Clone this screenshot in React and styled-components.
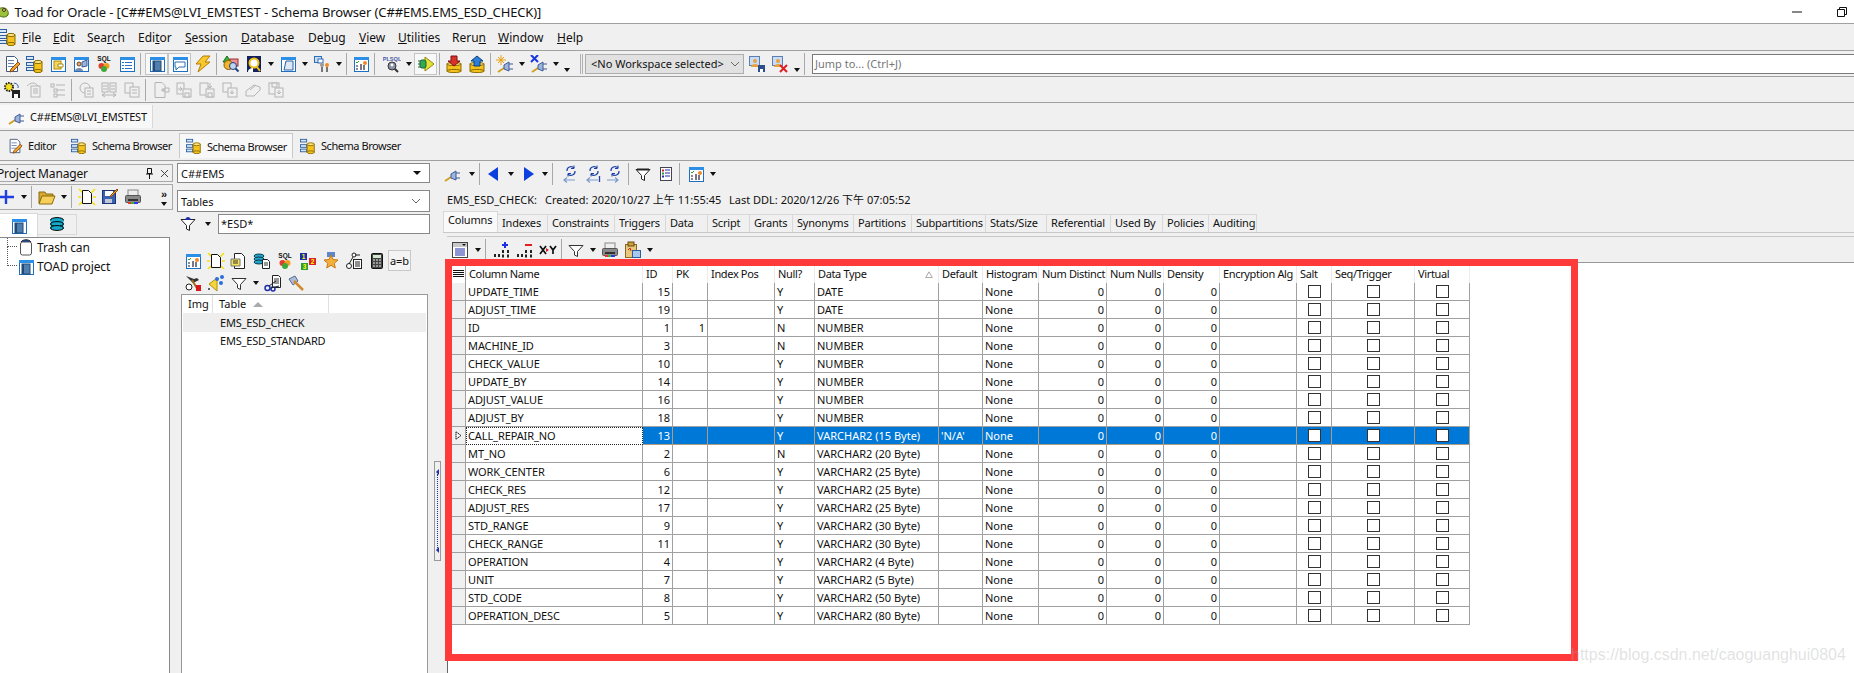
import React from "react";
import styled, { createGlobalStyle } from "styled-components";

const Global = createGlobalStyle`
  html, body { margin: 0; padding: 0; background: #f0f0f0; }
  body { width: 1854px; height: 673px; overflow: hidden; font-family: "Noto Sans", "Noto Sans CJK SC", sans-serif; font-size: 11px; color: #111; }
`;

/* ---------- icon drawings ---------- */
const Win = ({ x = 2, y = 2, w = 14, h = 14 }) => (
  <>
    <rect x={x + 0.5} y={y + 0.5} width={w} height={h} fill="#fff" stroke="#1c6fc4" />
    <rect x={x} y={y} width={w + 1} height={3} fill="#2b8fe8" />
  </>
);
const Cyl = ({ x = 8, y = 6, w = 8, h = 11, c = "#f5c21b", s = "#8a6a00" }) => (
  <>
    <rect x={x} y={y + 1} width={w} height={h - 2} fill={c} stroke={s} />
    <ellipse cx={x + w / 2} cy={y + 1} rx={w / 2} ry={1.6} fill="#ffe680" stroke={s} />
    <ellipse cx={x + w / 2} cy={y + h - 1} rx={w / 2} ry={1.6} fill={c} stroke={s} />
  </>
);
const Lines = ({ x, y, w, n = 3, c = "#667", step = 3 }) => (
  <>
    {Array.from({ length: n }).map((_, i) => (
      <rect key={i} x={x} y={y + i * step} width={w} height={1} fill={c} />
    ))}
  </>
);
const Funnel = ({ c = "#fff", s = "#222" }) => <path d="M2 4.5h14l-5.5 6v5l-3-1.5v-3.5z" fill={c} stroke={s} />;
const Plug = () => (
  <>
    <path d="M1 16l6-4" stroke="#d2a020" strokeWidth="2" />
    <path d="M7 9l5-3v9l-5-2z" fill="#9db4dc" stroke="#3d5a96" />
    <path d="M12 8h4M12 13h4" stroke="#3d5a96" />
  </>
);
const Sparkle = () => <path d="M2 2l6 6M8 2l-6 6M5 0v10M0 5h10" stroke="#e8a010" strokeWidth="1" />;
const Printer = () => (
  <>
    <rect x="4" y="2" width="10" height="6" fill="#eee" stroke="#888" />
    <rect x="1.5" y="7.5" width="15" height="7" rx="1" fill="#8a8a8a" stroke="#555" />
    <rect x="4" y="11" width="10" height="2" fill="#333" />
    <path d="M4 15h3" stroke="#e33" strokeWidth="2" />
    <path d="M7 15h3" stroke="#3b3" strokeWidth="2" />
    <path d="M10 15h4" stroke="#33e" strokeWidth="2" />
  </>
);
const Gray = ({ children }) => <g fill="#f0f0f0" stroke="#b4b4b4">{children}</g>;
const Refresh = ({ dir }) => (
  <>
    <path d="M6 6a4 4 0 0 1 7-3M14 6a4 4 0 0 1-7 3" fill="none" stroke="#1c3fa8" strokeWidth="1.2" />
    <path d="M13 0.500v3h-3M7 11.500v-3h3" fill="none" stroke="#1c3fa8" />
    <path d={dir === "r" ? "M2 15h11M10 12.500l3 2.500-3 2.500" : "M14 15H3M6 12.500L3 15l3 2.500"} fill="none" stroke="#7d9bd0" strokeWidth="1.2" />
  </>
);

const icons = {
  schema: (
    <>
      <g fill="#d8e6f8" stroke="#2c5f9e">
        <rect x="0.5" y="1.5" width="7" height="3" />
        <rect x="0.5" y="7.5" width="7" height="3" />
        <rect x="0.5" y="12.5" width="7" height="3" />
      </g>
      <Cyl />
    </>
  ),
  editor: (
    <>
      <path d="M3.5 1.5h8l3 3v12h-11z" fill="#fff" stroke="#44587a" />
      <Lines x={5} y={5} w={6} n={3} c="#6a86b0" />
      <path d="M15 7l2 2-7 7-3 1 1-3z" fill="#f2a32c" stroke="#8f4a10" />
    </>
  ),
  docWin: (
    <>
      <Win />
      <rect x="5" y="6" width="7" height="8" fill="#f6d860" stroke="#a88a10" />
      <path d="M9 9h5v3H9z" fill="#fff" stroke="#a88a10" />
    </>
  ),
  people: (
    <>
      <Win />
      <circle cx="7" cy="9" r="2" fill="#e0a878" stroke="#704a20" />
      <path d="M3 16c0-4 8-4 8 0z" fill="#7a8aa8" />
      <path d="M10 7l5-2v6l-5 1z" fill="#9db4dc" stroke="#3d5a96" />
    </>
  ),
  sql: (
    <>
      <text x="9" y="6" textAnchor="middle" fontFamily="Liberation Sans, sans-serif" fontWeight="700" fontSize="6.5" fill="#111">SQL</text>
      <circle cx="6.5" cy="11" r="3" fill="#e33b2c" />
      <circle cx="11.5" cy="11" r="3" fill="#f0a020" />
      <circle cx="9" cy="14" r="3" fill="#3fa83a" />
    </>
  ),
  listWin: (
    <>
      <Win />
      <Lines x={4} y={7} w={2} n={3} c="#2b6fc0" />
      <Lines x={7} y={7} w={7} n={3} c="#2b6fc0" />
    </>
  ),
  book: (
    <>
      <Win />
      <rect x="5" y="6" width="8" height="10" fill="#4f7fb0" stroke="#234a74" />
      <rect x="5" y="6" width="2" height="10" fill="#234a74" />
    </>
  ),
  chat: (
    <>
      <Win />
      <path d="M4 7h10v5H8l-3 3v-3H4z" fill="#fff" stroke="#2c6fb4" />
    </>
  ),
  bolt: <path d="M9 1h7l-5 6h5L4 17l3-8H2z" fill="#f9c82a" stroke="#b47d08" />,
  shapes: (
    <>
      <path d="M5 1l4 6H1z" fill="#3fae3a" stroke="#1a6d18" />
      <rect x="8" y="4" width="8" height="7" fill="#e8929a" stroke="#a02c2c" />
      <circle cx="6.5" cy="10" r="4.5" fill="#f2b42c" stroke="#8a5a0a" />
      <circle cx="11" cy="11" r="3.5" fill="#bcd4ee" stroke="#1f3f7a" />
      <path d="M13.5 13.5l3 3" stroke="#1f3f7a" strokeWidth="2" />
    </>
  ),
  face: (
    <>
      <rect x="2" y="1" width="14" height="16" fill="#14205e" />
      <circle cx="9" cy="8" r="4.5" fill="#fff" stroke="#f2c21b" strokeWidth="2" />
      <path d="M12 12l3 4" stroke="#f2c21b" strokeWidth="2" />
      <path d="M3 17c0-3 3-4 5-4v4z" fill="#fff" />
    </>
  ),
  frame: (
    <>
      <Win />
      <path d="M7 6h7v9H5z" fill="#dce8f6" stroke="#2c5f9e" />
    </>
  ),
  pins: (
    <>
      <rect x="1.5" y="1.5" width="7" height="6" fill="#c9dcf4" stroke="#2c6fb4" />
      <rect x="5" y="4" width="5" height="4" fill="#fff" stroke="#2c6fb4" />
      <circle cx="9" cy="10" r="2" fill="#999" />
      <circle cx="14" cy="10" r="2" fill="#ef8a2c" />
      <path d="M9 12v5M14 12v5" stroke="#777" strokeWidth="2" />
    </>
  ),
  chart: (
    <>
      <Win />
      <path d="M4 7l1 1 2-2" fill="none" stroke="#2a9a3a" />
      <rect x="4" y="10" width="2" height="2" fill="#889" />
      <rect x="4" y="13" width="2" height="2" fill="#889" />
      <rect x="8" y="9" width="2" height="6" fill="#778" />
      <rect x="11" y="10" width="2" height="5" fill="#778" />
      <circle cx="13" cy="8" r="2" fill="#ef8a2c" />
    </>
  ),
  plsql: (
    <>
      <text x="9" y="5.5" textAnchor="middle" fontFamily="Liberation Sans, sans-serif" fontWeight="700" fontSize="5.6" fill="#4a5aa0">PLSQL</text>
      <circle cx="9" cy="11" r="4" fill="#8a93a8" stroke="#333" />
      <circle cx="9" cy="10" r="1.4" fill="#fff" />
      <path d="M12 14l3 3" stroke="#333" strokeWidth="2" />
    </>
  ),
  play: (
    <>
      <path d="M8 2l9 7-9 7z" fill="#e6e03a" stroke="#8d8a10" />
      <rect x="3" y="5" width="6" height="8" rx="2" fill="#34a853" stroke="#14652c" />
      <path d="M1 6h2M1 9h2M1 12h2" stroke="#14652c" />
    </>
  ),
  dbDown: (
    <>
      <Cyl x={2} y={8} w={14} h={9} />
      <path d="M6 1h6v5h3l-6 5-6-5h3z" fill="#d8322a" stroke="#7a1410" />
    </>
  ),
  dbUp: (
    <>
      <Cyl x={2} y={8} w={14} h={9} />
      <path d="M9 1l6 5h-3v5H6V6H3z" fill="#2b7fd8" stroke="#103f7a" />
    </>
  ),
  plugNew: (
    <>
      <Sparkle />
      <g transform="translate(1 1)">
        <Plug />
      </g>
    </>
  ),
  plugX: (
    <>
      <path d="M1 0l7 7M8 0L1 7" stroke="#1a36e0" strokeWidth="2" />
      <g transform="translate(1 1)">
        <Plug />
      </g>
    </>
  ),
  plug: <Plug />,
  wsSave: (
    <>
      <rect x="1.5" y="1.5" width="10" height="9" fill="#c9dcf4" stroke="#5b7fb4" />
      <circle cx="7" cy="6" r="2" fill="#e8a040" />
      <path d="M3 12c0-4 8-4 8 0z" fill="#e8a040" />
      <rect x="10" y="10" width="7" height="7" fill="#2c4f8c" />
      <rect x="12" y="14" width="3" height="3" fill="#fff" />
    </>
  ),
  wsDel: (
    <>
      <rect x="1.5" y="1.5" width="10" height="9" fill="#c9dcf4" stroke="#5b7fb4" />
      <circle cx="7" cy="6" r="2" fill="#e8a040" />
      <path d="M3 12c0-4 8-4 8 0z" fill="#e8a040" />
      <path d="M9 10l7 7M16 10l-7 7" stroke="#e02020" strokeWidth="2" />
    </>
  ),
  gearSave: (
    <>
      <circle cx="6" cy="6" r="4" fill="#f2e020" stroke="#222" strokeDasharray="1.5 1" strokeWidth="2" />
      <path d="M11 2q5 1 4 5" fill="none" stroke="#2b5fa8" />
      <rect x="9" y="9" width="8" height="8" fill="#222" />
      <rect x="11" y="13" width="4" height="4" fill="#fff" />
    </>
  ),
  g1: (
    <Gray>
      <path d="M1 5c4-4 8-4 11 0" />
      <rect x="5" y="5" width="9" height="11" />
      <path d="M7 8h5M7 10h5M7 12h5" />
    </Gray>
  ),
  g2: (
    <Gray>
      <rect x="2" y="3" width="3" height="3" />
      <path d="M7 4h9M7 9h9M7 14h9" />
      <rect x="5" y="8" width="3" height="3" />
      <rect x="5" y="13" width="3" height="3" />
    </Gray>
  ),
  g3: (
    <Gray>
      <circle cx="8" cy="7" r="5" />
      <rect x="8" y="7" width="8" height="9" />
      <path d="M10 10h4M10 13h4" />
    </Gray>
  ),
  g4: (
    <Gray>
      <rect x="2" y="2" width="6" height="9" />
      <rect x="10" y="2" width="6" height="9" />
      <path d="M3 5h4M11 5h4M3 8h4M11 8h4M2 14h14M5 12l-3 2 3 2M13 12l3 2-3 2" />
    </Gray>
  ),
  g5: (
    <Gray>
      <rect x="2" y="2" width="8" height="10" />
      <rect x="7" y="6" width="9" height="10" />
      <path d="M9 9h5M9 12h5" />
    </Gray>
  ),
  g6: (
    <Gray>
      <path d="M3 1.5h7l3 3v12H3z" />
      <path d="M9 9h4M11 7v4" />
      <path d="M13 7h4v4h-4z" />
    </Gray>
  ),
  g7: (
    <Gray>
      <rect x="2" y="2" width="7" height="11" />
      <rect x="8" y="8" width="8" height="8" />
      <rect x="10" y="12" width="4" height="4" />
      <path d="M3 8h4M5 6l2 2-2 2" />
    </Gray>
  ),
  g8: (
    <Gray>
      <rect x="2" y="2" width="8" height="12" />
      <rect x="8" y="8" width="8" height="8" />
      <rect x="10" y="12" width="4" height="4" />
      <path d="M12 2v5M10 5l2 2 2-2" />
    </Gray>
  ),
  g9: (
    <Gray>
      <rect x="2" y="2" width="8" height="9" />
      <rect x="7" y="7" width="9" height="9" />
      <path d="M11 9v4M9 11l2 2 2-2" />
    </Gray>
  ),
  g10: (
    <Gray>
      <path d="M2 10l8-6 6 2v3l-6 6H2z" />
      <path d="M6 9l6-5" />
    </Gray>
  ),
  g11: (
    <Gray>
      <rect x="2" y="2" width="10" height="11" />
      <rect x="5" y="2" width="5" height="4" />
      <rect x="8" y="7" width="8" height="9" />
      <path d="M12 9v4M10 11l2 2 2-2" />
    </Gray>
  ),
  plus: <path d="M7 2v14M1 9h14" stroke="#1f3fe0" strokeWidth="2.4" />,
  folder: (
    <>
      <path d="M1 4h6l1 2h7v3H4l-3 6z" fill="#d8a832" stroke="#8a6a10" />
      <path d="M4 8h13l-3 8H1z" fill="#f6cf5a" stroke="#8a6a10" />
    </>
  ),
  newDoc: (
    <>
      <path d="M1 1l4 4M17 1l-4 4M1 17l3-3M17 17l-3-3M0 9h3M15 9h3" stroke="#f4e012" strokeWidth="1.6" />
      <path d="M4.5 2.5h6l3 3v10h-9z" fill="#fff" stroke="#111" />
    </>
  ),
  floppy: (
    <>
      <rect x="1.5" y="2.5" width="13" height="13" fill="#3a62b4" stroke="#1a3474" />
      <rect x="4" y="3" width="8" height="5" fill="#fff" />
      <rect x="4" y="11" width="7" height="4" fill="#c0c8d8" />
      <path d="M16 1l1 1-6 6-2 1 1-2z" fill="#f2a32c" stroke="#8f4a10" />
    </>
  ),
  printer: <Printer />,
  trash: (
    <>
      <rect x="3.5" y="3" width="11" height="13" rx="2" fill="#fff" stroke="#555" />
      <path d="M4 3c2-3 8-3 10 0" fill="#2c4f8c" stroke="#223" />
    </>
  ),
  dbStack: (
    <>
      <ellipse cx="9" cy="4" rx="6.5" ry="2.4" fill="#16a8c8" stroke="#000" />
      <rect x="2.5" y="4" width="13" height="9" fill="#16a8c8" />
      <ellipse cx="9" cy="8" rx="6.5" ry="2.4" fill="#16a8c8" stroke="#000" />
      <ellipse cx="9" cy="12" rx="6.5" ry="2.4" fill="#16a8c8" stroke="#000" />
    </>
  ),
  filterHat: (
    <>
      <Funnel />
      <path d="M6 5c1-4 5-4 6 0z" fill="#1c2ea8" />
    </>
  ),
  funnelBlack: (
    <>
      <Funnel />
      <path d="M3 4.5h12" stroke="#222" strokeWidth="2" />
    </>
  ),
  funnel: <Funnel s="#333" />,
  docEdit: (
    <>
      <path d="M4.5 1.5h7l3 3v12h-10z" fill="#fff" stroke="#222" />
      <path d="M1 7h9v7H1z" fill="#f5e25a" stroke="#777" />
      <path d="M3 9h5M3 11h5" stroke="#333" />
    </>
  ),
  dbDoc: (
    <>
      <ellipse cx="6" cy="4" rx="5" ry="2" fill="#22a6c8" stroke="#103a50" />
      <ellipse cx="6" cy="7" rx="5" ry="2" fill="#22a6c8" stroke="#103a50" />
      <ellipse cx="6" cy="10" rx="5" ry="2" fill="#22a6c8" stroke="#103a50" />
      <path d="M9.5 7.5h5l2 2v7h-7z" fill="#fff" stroke="#222" />
      <path d="M11 11h4M11 13h4" stroke="#333" />
    </>
  ),
  numbers: (
    <>
      <rect x="1" y="1" width="7" height="7" fill="#1c2ea8" />
      <rect x="10" y="6" width="7" height="7" fill="#d8202a" />
      <rect x="2" y="11" width="7" height="7" fill="#2a9a3a" />
      <text x="4.5" y="7" textAnchor="middle" fontSize="6.5" fontWeight="700" fill="#ff0" fontFamily="Liberation Sans, sans-serif">1</text>
      <text x="13.5" y="12" textAnchor="middle" fontSize="6.5" fontWeight="700" fill="#ff0" fontFamily="Liberation Sans, sans-serif">2</text>
      <text x="5.5" y="17" textAnchor="middle" fontSize="6.5" fontWeight="700" fill="#ff0" fontFamily="Liberation Sans, sans-serif">3</text>
    </>
  ),
  medal: (
    <>
      <path d="M5 0h8v5H5z" fill="#5f86c8" />
      <path d="M9 3l2 4.5 5 .5-3.700 3.300 1 4.700L9 13.300 4.700 16l1-4.700L2 8l5-.5z" fill="#f4b03c" stroke="#c87a10" />
    </>
  ),
  tree: (
    <>
      <circle cx="4" cy="14" r="2.500" fill="#fff" stroke="#222" />
      <circle cx="9" cy="3" r="2" fill="#fff" stroke="#222" />
      <path d="M4 12l4-7M10 3h5" stroke="#222" />
      <rect x="8.500" y="7.500" width="8" height="9" fill="#fff" stroke="#222" />
      <path d="M10 10h5M10 12h5M10 14h5" stroke="#222" />
    </>
  ),
  calc: (
    <>
      <rect x="3.500" y="1.500" width="11" height="15" rx="1" fill="#444" stroke="#111" />
      <rect x="5" y="3" width="8" height="3" fill="#cfe8cf" />
      <path d="M5 8h2M8 8h2M11 8h2M5 11h2M8 11h2M11 11h2M5 14h2M8 14h2M11 14h2" stroke="#eee" />
    </>
  ),
  hammerRed: (
    <>
      <path d="M2 2l8 3 3-1 2 2-6 3z" fill="#333" />
      <path d="M8 6l6 10" stroke="#a06a20" strokeWidth="2" />
      <circle cx="5" cy="13" r="3" fill="#fff" stroke="#222" />
      <rect x="12" y="11" width="5" height="6" fill="#d81818" />
    </>
  ),
  dots: (
    <>
      <path d="M2 10l8-6v13z" fill="#f4d53a" stroke="#b09010" />
      <circle cx="10" cy="5" r="2" fill="#2b6fd8" />
      <circle cx="15" cy="3" r="2" fill="#2b6fd8" />
      <circle cx="14" cy="9" r="2" fill="#2b6fd8" />
      <circle cx="2" cy="15" r="1" fill="#333" />
    </>
  ),
  scissors: (
    <>
      <path d="M8.500 1.500h6l2 2v10h-8z" fill="#fff" stroke="#222" />
      <path d="M10 5h5M10 7h5M10 9h5" stroke="#333" />
      <circle cx="3.500" cy="14" r="2.500" fill="none" stroke="#1c2ea8" strokeWidth="1.500" />
      <circle cx="9" cy="15" r="2" fill="none" stroke="#1c2ea8" strokeWidth="1.500" />
      <path d="M5 12l7-5M7 14l8-2" stroke="#222" />
    </>
  ),
  axe: (
    <>
      <path d="M2 5l6-3 3 5-5 4z" fill="#aebcd8" stroke="#556a90" />
      <path d="M7 7l9 9" stroke="#d08a30" strokeWidth="2.500" />
    </>
  ),
  arrowL: <path d="M3 9l10-7v14z" fill="#0b3fe0" />,
  arrowR: <path d="M15 9L5 2v14z" fill="#0b3fe0" />,
  r1: <Refresh dir="l" />,
  r2: (
    <>
      <Refresh dir="l" />
      <path d="M15.500 11v6" stroke="#1c3fa8" strokeWidth="1.300" />
    </>
  ),
  r3: <Refresh dir="r" />,
  listSmall: (
    <>
      <rect x="3.500" y="2.500" width="11" height="13" fill="#fff" stroke="#445" />
      <path d="M8 5h5M8 8h5M8 11h5" stroke="#1c2ea8" />
      <rect x="5" y="4.500" width="2" height="2" fill="#d82020" />
      <rect x="5" y="7.500" width="2" height="2" fill="#2a9a3a" />
      <rect x="5" y="10.500" width="2" height="2" fill="#1c2ea8" />
    </>
  ),
  colGrid: (
    <>
      <rect x="1.500" y="1.500" width="15" height="15" fill="#fff" stroke="#444" />
      <rect x="2" y="2" width="14" height="4" fill="#c8c8c8" />
      <path d="M4 8h10M4 10h10M4 12h10M4 14h10" stroke="#1c2ea8" />
      <path d="M11 3h4l-2 2z" fill="#111" />
    </>
  ),
  addBars: (
    <>
      <path d="M2 13v4M6 13v4M10 9v8M15 9v8" stroke="#222" strokeWidth="2" strokeDasharray="3 1.500" />
      <path d="M12 1v6M9 4h6" stroke="#1c2ee0" strokeWidth="2" />
    </>
  ),
  delBars: (
    <>
      <path d="M2 13v4M6 13v4M10 9v8M15 9v8" stroke="#222" strokeWidth="2" strokeDasharray="3 1.500" />
      <path d="M9 4h7" stroke="#e02020" strokeWidth="2" />
    </>
  ),
  xy: (
    <>
      <path d="M1 5l6 8M7 5l-6 8M11 5l3 4 3-4M14 9v4" stroke="#111" strokeWidth="1.700" fill="none" />
      <path d="M7 7l3 2-3 2z" fill="#d82020" />
    </>
  ),
  clip: (
    <>
      <rect x="1.500" y="3.500" width="11" height="13" fill="#e8c87a" stroke="#8a6a20" />
      <rect x="4" y="1" width="6" height="4" fill="#c8a040" stroke="#6a4a10" />
      <path d="M4 9l2-2 1 3" fill="none" stroke="#d02020" />
      <rect x="8.500" y="9.500" width="8" height="7" fill="#a8c8ee" stroke="#2c5f9e" />
    </>
  ),
};

/* ---------- shared parts ---------- */
const Svg = styled.svg`
  display: block;
  flex: none;
  overflow: hidden;
`;
const Icon = ({ name, size = 18 }) => (
  <Svg width={size} height={size} viewBox="0 0 18 18">
    {icons[name]}
  </Svg>
);
const Cell = styled.span`
  flex: none;
  width: ${(p) => p.$w || 23}px;
  height: 22px;
  display: flex;
  align-items: center;
  justify-content: center;
  box-sizing: border-box;
  ${(p) => p.$on && "background:#f8f8f8;outline:1px solid #c4c4c4;outline-offset:-1px;"}
`;
const DropCell = styled.span`
  flex: none;
  width: 11px;
  height: 22px;
  display: flex;
  align-items: ${(p) => (p.$low ? "flex-end" : "center")};
  justify-content: center;
  padding-bottom: ${(p) => (p.$low ? 3 : 0)}px;
  box-sizing: border-box;
  &::after {
    content: "";
    border-left: 3.5px solid transparent;
    border-right: 3.5px solid transparent;
    border-top: 4px solid #111;
  }
`;
const SepCell = styled.span`
  flex: none;
  width: 5px;
  height: 22px;
  display: flex;
  justify-content: center;
  &::after {
    content: "";
    width: 1px;
    background: #a8a8a8;
  }
`;
const Gap = styled.span`
  flex: none;
  width: ${(p) => p.$w}px;
`;
const Strip = ({ items }) => (
  <>
    {items.map((it, i) => {
      if (typeof it === "number") return <Gap key={i} $w={it} />;
      if (it === "|") return <SepCell key={i} />;
      if (it === "v") return <DropCell key={i} />;
      if (it === "_") return <DropCell key={i} $low />;
      const [name, w] = it.split(":");
      const on = name.endsWith("!");
      const n = on ? name.slice(0, -1) : name;
      return (
        <Cell key={i} $w={w ? +w : 23} $on={on}>
          <Icon name={n} />
        </Cell>
      );
    })}
  </>
);

/* ---------- top bars ---------- */
const Page = styled.div`
  width: 1854px;
  height: 673px;
  display: flex;
  flex-direction: column;
  overflow: hidden;
  position: relative;
`;
const TitleBar = styled.header`
  height: 23px;
  flex: none;
  background: #fff;
  border-bottom: 1px solid #a0a0a0;
  display: flex;
  align-items: center;
  font-size: 13px;
  padding-right: 7px;
`;
const TitleLogo = styled.span`
  width: 14px;
  margin-left: -4px;
  margin-right: 4.500px;
`;
const TitleText = styled.span`
  flex: 1;
  color: #111;
  letter-spacing: -0.13px;
`;
const WinButtons = styled.span`
  display: flex;
  align-items: center;
  gap: 35px;
`;
const MenuBar = styled.nav`
  height: 26px;
  flex: none;
  background: #f0f0f0;
  border-bottom: 1px solid #a0a0a0;
  display: flex;
  align-items: center;
  font-size: 12px;
`;
const MenuLogo = styled.span`
  width: 23px;
  margin-left: -1px;
  flex: none;
`;
const MenuItem = styled.span`
  flex: none;
  width: ${(p) => p.$w}px;
`;
const Key = styled.span`
  text-decoration: underline;
`;
const ToolRow = styled.div`
  height: 25px;
  flex: none;
  box-sizing: content-box;
  border-bottom: 1px solid #a0a0a0;
  display: flex;
  align-items: center;
`;
const DoubleSep = styled.span`
  flex: none;
  width: 3px;
  height: 20px;
  margin: 0 2px 0 3px;
  border-left: 1px solid #b0b0b0;
  border-right: 1px solid #b0b0b0;
  box-sizing: border-box;
`;
const WorkspaceCombo = styled.div`
  flex: none;
  width: 159px;
  height: 20px;
  box-sizing: border-box;
  border: 1px solid #adadad;
  background: #e1e1e1;
  display: flex;
  align-items: center;
  justify-content: space-between;
  padding: 0 3px 0 5px;
`;
const Chevron = styled.svg`
  flex: none;
  display: block;
`;
const ChevDown = () => (
  <Chevron width="10" height="6" viewBox="0 0 10 6">
    <path d="M1 1l4 4 4-4" fill="none" stroke="#666" />
  </Chevron>
);
const JumpInput = styled.div`
  flex: 1;
  height: 20px;
  box-sizing: border-box;
  margin-left: 5px;
  background: #fff;
  border: 1px solid #7a7a7a;
  border-right: none;
  padding-left: 2px;
  color: #777;
  line-height: 18px;
`;
const ConnBar = styled.div`
  height: 28px;
  flex: none;
  border-bottom: 1px solid #a0a0a0;
  padding-top: 2px;
  box-sizing: border-box;
`;
const ConnTab = styled.div`
  width: 153px;
  height: 23px;
  background: #f8f8f8;
  border-right: 1px solid #d8d8d8;
  display: flex;
  align-items: center;
  gap: 4px;
  padding-left: 8px;
  box-sizing: border-box;
  letter-spacing: -0.2px;
`;
const WinBar = styled.div`
  height: 30px;
  flex: none;
  box-sizing: border-box;
  border-bottom: 1px solid #a0a0a0;
  display: flex;
  align-items: center;
`;
const WinTab = styled.div`
  flex: none;
  width: ${(p) => p.$w}px;
  height: 25px;
  box-sizing: border-box;
  display: flex;
  align-items: center;
  gap: 5px;
  padding-left: 7px;
  white-space: nowrap;
  letter-spacing: -0.45px;
  ${(p) => p.$on && "background:#f8f8f8;border:1px solid #c8c8c8;border-bottom:none;padding-left:6px;"}
`;

/* ---------- main ---------- */
const Main = styled.main`
  flex: 1;
  min-height: 0;
  display: flex;
`;
const ProjectPanel = styled.section`
  width: 173px;
  flex: none;
  margin-right: 4px;
  padding-top: 3px;
  display: flex;
  flex-direction: column;
`;
const PanelHead = styled.div`
  height: 18px;
  flex: none;
  box-sizing: border-box;
  border: 1px solid #a8a8a8;
  border-left: none;
  font-size: 12px;
  display: flex;
  align-items: center;
  justify-content: space-between;
  padding-right: 3px;
`;
const PanelTitle = styled.span`
  margin-left: -3px;
  letter-spacing: -0.15px;
`;
const HeadTools = styled.span`
  display: flex;
  align-items: center;
  gap: 6px;
`;
const PanelTools = styled.div`
  height: 26px;
  flex: none;
  margin-top: 2px;
  box-sizing: border-box;
  border: 1px solid #a8a8a8;
  border-left: none;
  display: flex;
  align-items: center;
`;
const MoreGlyph = styled.span`
  margin-left: auto;
  margin-right: 2px;
  width: 12px;
  display: flex;
  flex-direction: column;
  align-items: center;
  font-size: 11px;
  line-height: 10px;
  font-family: "Liberation Sans", sans-serif;
  font-weight: 700;
`;
const MoreDrop = styled.span`
  margin-top: 3px;
  border-left: 3.500px solid transparent;
  border-right: 3.500px solid transparent;
  border-top: 4px solid #111;
`;
const SideTabs = styled.div`
  height: 24px;
  flex: none;
  margin-top: 3px;
  display: flex;
`;
const SideTab = styled.div`
  width: ${(p) => (p.$on ? 38 : 39)}px;
  height: ${(p) => (p.$on ? 24 : 21)}px;
  margin-top: ${(p) => (p.$on ? 0 : 1)}px;
  box-sizing: border-box;
  background: ${(p) => (p.$on ? "#fff" : "#f0f0f0")};
  border: 1px solid #d8d8d8;
  border-left: none;
  ${(p) => p.$on && "border-bottom:none;"}
  display: flex;
  align-items: center;
  justify-content: center;
`;
const TreeBox = styled.div`
  flex: 1;
  width: 170px;
  box-sizing: border-box;
  background: #fff;
  border: 1px solid #888;
  border-left: none;
  border-bottom: none;
  padding-left: 7px;
  font-size: 12px;
`;
const TreeRow = styled.div`
  height: 19px;
  display: flex;
  align-items: center;
`;
const Elbow = styled.span`
  flex: none;
  align-self: flex-start;
  width: 10px;
  height: ${(p) => (p.$tall ? 19 : 9)}px;
  margin-top: ${(p) => (p.$tall ? -10 : 0)}px;
  box-sizing: border-box;
  border-left: 1px dotted #555;
  border-bottom: 1px dotted #555;
`;
const TreeLabel = styled.span`
  margin-left: 2px;
  letter-spacing: -0.1px;
`;

const SchemaPanel = styled.section`
  width: 253px;
  flex: none;
  padding-top: 2px;
  display: flex;
  flex-direction: column;
`;
const Combo = styled.div`
  height: ${(p) => p.$h}px;
  flex: none;
  box-sizing: border-box;
  background: #fff;
  border: 1px solid #888;
  margin-bottom: 7px;
  padding: 0 8px 0 3px;
  display: flex;
  align-items: center;
  justify-content: space-between;
`;
const ComboCaret = styled.span`
  border-left: 4px solid transparent;
  border-right: 4px solid transparent;
  border-top: 4px solid #111;
`;
const FilterRow = styled.div`
  height: 22px;
  flex: none;
  margin-top: -6px;
  display: flex;
  align-items: center;
`;
const FilterInput = styled.div`
  flex: 1;
  height: 20px;
  box-sizing: border-box;
  background: #fff;
  border: 1px solid #888;
  padding-left: 2px;
  line-height: 18px;
`;
const IconRow = styled.div`
  height: ${(p) => p.$h}px;
  margin-top: ${(p) => p.$mt || 0}px;
  flex: none;
  display: flex;
  align-items: center;
`;
const TextButton = styled.span`
  flex: none;
  width: 23px;
  height: 21px;
  box-sizing: border-box;
  border: 1px solid #c8c8c8;
  background: #f4f4f4;
  display: flex;
  align-items: center;
  justify-content: center;
  font-size: 11px;
`;
const TableList = styled.div`
  flex: 1;
  margin: 0 2px 0 4px;
  box-sizing: border-box;
  border: 1px solid #999;
  border-bottom: none;
  background: #fff;
`;
const ListHead = styled.div`
  height: 18px;
  display: flex;
  font-size: 11px;
`;
const ListHeadCell = styled.span`
  flex: none;
  width: ${(p) => p.$w}px;
  box-sizing: border-box;
  border-right: 1px solid #e0e0e0;
  padding-left: ${(p) => p.$pl}px;
  line-height: 18px;
  display: flex;
  align-items: center;
  gap: 7px;
`;
const SortUp = styled.span`
  border-left: 5px solid transparent;
  border-right: 5px solid transparent;
  border-bottom: 5px solid #aaa;
`;
const ListRow = styled.div`
  height: ${(p) => (p.$on ? 19 : 17)}px;
  margin: 0 1px;
  padding-left: 37px;
  background: ${(p) => (p.$on ? "#eee" : "#fff")};
  display: flex;
  align-items: center;
  letter-spacing: -0.2px;
`;
const Splitter = styled.div`
  flex: none;
  align-self: flex-start;
  width: 7px;
  height: 100px;
  margin: 300px 2px 0 4px;
  box-sizing: border-box;
  border: 1px solid #999;
  background: #f0f0f0;
  display: flex;
  flex-direction: column;
  align-items: center;
  justify-content: space-between;
  padding: 7px 0;
  position: relative;
  &::before {
    content: "";
    position: absolute;
    top: 12px;
    bottom: 12px;
    left: 2px;
    border-left: 1px dotted #1c2ea8;
  }
`;
const SplitArrow = styled.span`
  border-top: 3px solid transparent;
  border-bottom: 3px solid transparent;
  border-right: 3px solid #1c2ea8;
`;

const DataPane = styled.section`
  flex: 1;
  min-width: 0;
  display: flex;
  flex-direction: column;
  position: relative;
`;
const PaneTools = styled.div`
  height: 24px;
  margin-top: 1px;
  flex: none;
  display: flex;
  align-items: center;
`;
const InfoLine = styled.div`
  height: 26px;
  flex: none;
  box-sizing: border-box;
  padding-left: 4px;
  display: flex;
  align-items: center;
`;
const InfoPart = styled.span`
  flex: none;
  width: ${(p) => p.$w}px;
  white-space: nowrap;
`;
const TabStrip = styled.div`
  height: 21px;
  flex: none;
  box-sizing: border-box;
  border-bottom: 1px solid #c8c8c8;
  display: flex;
  align-items: flex-end;
`;
const PageTab = styled.span`
  flex: none;
  width: ${(p) => p.$w}px;
  height: ${(p) => (p.$on ? 21 : 18)}px;
  box-sizing: border-box;
  background: ${(p) => (p.$on ? "#f9f9f9" : "#f0f0f0")};
  border-top: 1px solid #d8d8d8;
  border-right: 1px solid #d8d8d8;
  ${(p) => p.$on && "border-left:1px solid #d8d8d8;"}
  padding-left: 4px;
  line-height: 16px;
  white-space: nowrap;
  letter-spacing: -0.2px;
`;
const GridTools = styled.div`
  height: 26px;
  margin-top: 3px;
  flex: none;
  display: flex;
  align-items: center;
  border-top: 1px solid #c8c8c8;
  box-sizing: border-box;
  margin-left: 4px;
  padding-left: 0;
`;
const GridPanel = styled.div`
  flex: 1;
  min-height: 0;
  margin-left: 4px;
  background: #fff;
  border-left: 1px solid #666;
  border-top: 1px solid #999;
  padding: 2px 0 0 4px;
`;
const Grid = styled.div`
  display: grid;
  width: 1018px;
  grid-template-columns: 14px 177px 30px 35px 67px 40px 124px 44px 56px 68px 57px 56px 77px 35px 83px 55px;
  grid-auto-rows: 18px;
`;
const HeadCell = styled.div`
  box-sizing: border-box;
  background: #fff;
  border-right: 1px solid #ececec;
  padding-left: 3px;
  line-height: 18px;
  white-space: nowrap;
  display: flex;
  align-items: center;
  letter-spacing: -0.35px;
  justify-content: ${(p) => (p.$sort ? "space-between" : "flex-start")};
  padding-right: ${(p) => (p.$sort ? 5 : 0)}px;
`;
const GripLines = styled.span`
  width: 11px;
  height: 8px;
  background: repeating-linear-gradient(#111 0 1px, #fff 1px 2px);
`;
const SortHollow = styled.svg`
  display: block;
  flex: none;
`;
const IndicatorCell = styled.div`
  box-sizing: border-box;
  background: ${(p) => (p.$head ? "#fff" : "#f0f0f0")};
  border-right: 1px solid #a0a0a0;
  border-bottom: ${(p) => (p.$head ? "none" : "1px solid #a0a0a0")};
  display: flex;
  align-items: center;
  justify-content: center;
`;
const DataCell = styled.div`
  box-sizing: border-box;
  border-right: 1px solid ${(p) => (p.$sel ? "#b09a80" : "#a0a0a0")};
  border-bottom: 1px solid ${(p) => (p.$sel ? "#b09a80" : "#a0a0a0")};
  background: ${(p) => (p.$sel ? "#0078d7" : "#fff")};
  color: ${(p) => (p.$sel ? "#fff" : "#111")};
  padding: 0 2px;
  line-height: 17px;
  white-space: nowrap;
  overflow: hidden;
  text-align: ${(p) => (p.$right ? "right" : "left")};
  ${(p) => p.$box && "display:flex;align-items:center;justify-content:center;"}
`;
const NameCell = styled(DataCell)`
  background: #fff;
  color: #111;
  letter-spacing: -0.1px;
  ${(p) => p.$sel && "outline:1px dotted #222;outline-offset:-1px;border-color:#fff;"}
`;
const Check = styled.span`
  width: 13px;
  height: 13px;
  box-sizing: border-box;
  background: #fff;
  border: 1px solid #333;
`;
const RedFrame = styled.div`
  position: absolute;
  left: 2px;
  top: 98px;
  width: 1133px;
  height: 402px;
  box-sizing: border-box;
  border: 7px solid #ff3a3a;
  pointer-events: none;
`;
const Watermark = styled.div`
  position: absolute;
  left: 1571px;
  top: 645px;
  font-family: "Liberation Sans", sans-serif;
  font-size: 16px;
  line-height: 20px;
  color: rgba(170, 170, 170, 0.35);
  white-space: nowrap;
`;

/* ---------- data ---------- */
const menu = [
  ["", "F", "ile", 31],
  ["", "E", "dit", 34],
  ["Sea", "r", "ch", 51],
  ["Edi", "t", "or", 47],
  ["", "S", "ession", 56],
  ["", "D", "atabase", 67],
  ["De", "b", "ug", 51],
  ["", "V", "iew", 39],
  ["", "U", "tilities", 54],
  ["Reru", "n", "", 46],
  ["", "W", "indow", 59],
  ["", "H", "elp", 40],
];
const pageTabs = [
  ["Indexes", 50], ["Constraints", 67], ["Triggers", 51], ["Data", 42], ["Script", 42], ["Grants", 43],
  ["Synonyms", 61], ["Partitions", 58], ["Subpartitions", 74], ["Stats/Size", 61], ["Referential", 64],
  ["Used By", 52], ["Policies", 46], ["Auditing", 48],
];
const heads = ["Column Name", "ID", "PK", "Index Pos", "Null?", "Data Type", "Default", "Histogram", "Num Distinct", "Num Nulls", "Density", "Encryption Alg", "Salt", "Seq/Trigger", "Virtual"];
const rows = [
  ["UPDATE_TIME", 15, "", "Y", "DATE"],
  ["ADJUST_TIME", 19, "", "Y", "DATE"],
  ["ID", 1, 1, "N", "NUMBER"],
  ["MACHINE_ID", 3, "", "N", "NUMBER"],
  ["CHECK_VALUE", 10, "", "Y", "NUMBER"],
  ["UPDATE_BY", 14, "", "Y", "NUMBER"],
  ["ADJUST_VALUE", 16, "", "Y", "NUMBER"],
  ["ADJUST_BY", 18, "", "Y", "NUMBER"],
  ["CALL_REPAIR_NO", 13, "", "Y", "VARCHAR2 (15 Byte)", "'N/A'"],
  ["MT_NO", 2, "", "N", "VARCHAR2 (20 Byte)"],
  ["WORK_CENTER", 6, "", "Y", "VARCHAR2 (25 Byte)"],
  ["CHECK_RES", 12, "", "Y", "VARCHAR2 (25 Byte)"],
  ["ADJUST_RES", 17, "", "Y", "VARCHAR2 (25 Byte)"],
  ["STD_RANGE", 9, "", "Y", "VARCHAR2 (30 Byte)"],
  ["CHECK_RANGE", 11, "", "Y", "VARCHAR2 (30 Byte)"],
  ["OPERATION", 4, "", "Y", "VARCHAR2 (4 Byte)"],
  ["UNIT", 7, "", "Y", "VARCHAR2 (5 Byte)"],
  ["STD_CODE", 8, "", "Y", "VARCHAR2 (50 Byte)"],
  ["OPERATION_DESC", 5, "", "Y", "VARCHAR2 (80 Byte)"],
];

const Row = ({ r }) => {
  const sel = r[0] === "CALL_REPAIR_NO";
  return (
    <>
      <IndicatorCell>
        {sel && (
          <Svg width="7" height="9" viewBox="0 0 7 9">
            <path d="M1 .8v7.400L6 4.500z" fill="#fff" stroke="#111" strokeDasharray="1.500 .5" />
          </Svg>
        )}
      </IndicatorCell>
      <NameCell $sel={sel}>{r[0]}</NameCell>
      <DataCell $sel={sel} $right>{r[1]}</DataCell>
      <DataCell $sel={sel} $right>{r[2]}</DataCell>
      <DataCell $sel={sel} />
      <DataCell $sel={sel}>{r[3]}</DataCell>
      <DataCell $sel={sel}>{r[4]}</DataCell>
      <DataCell $sel={sel}>{r[5] || ""}</DataCell>
      <DataCell $sel={sel}>None</DataCell>
      <DataCell $sel={sel} $right>0</DataCell>
      <DataCell $sel={sel} $right>0</DataCell>
      <DataCell $sel={sel} $right>0</DataCell>
      <DataCell $sel={sel} />
      <DataCell $sel={sel} $box><Check /></DataCell>
      <DataCell $sel={sel} $box><Check /></DataCell>
      <DataCell $sel={sel} $box><Check /></DataCell>
    </>
  );
};

export default function App() {
  return (
    <Page>
      <Global />
      <TitleBar>
        <TitleLogo>
          <Svg width="14" height="14" viewBox="0 0 14 14">
            <path d="M1 8c0-4 4-6 7-5 3 0 5 4 4 7-2 3-8 3-11-2z" fill="#9cc23a" stroke="#4d6a10" />
            <circle cx="8" cy="5" r="1.500" fill="#f4d53a" stroke="#333" />
          </Svg>
        </TitleLogo>
        <TitleText>Toad for Oracle - [C##EMS@LVI_EMSTEST - Schema Browser (C##EMS.EMS_ESD_CHECK)]</TitleText>
        <WinButtons>
          <Svg width="10" height="10" viewBox="0 0 10 10"><path d="M0 5h10" stroke="#111" /></Svg>
          <Svg width="10" height="10" viewBox="0 0 10 10">
            <path d="M2.500 2.500V.5h7v7h-2M.5 2.500h7v7h-7z" fill="none" stroke="#111" />
          </Svg>
        </WinButtons>
      </TitleBar>
      <MenuBar>
        <MenuLogo><Icon name="schema" /></MenuLogo>
        {menu.map(([a, k, b, w]) => (
          <MenuItem key={a + k + b} $w={w}>{a}<Key>{k}</Key>{b}</MenuItem>
        ))}
      </MenuBar>
      <ToolRow>
        <Strip items={["editor", "schema", "docWin", "people", "sql", "listWin", "|", 2, "book!", "chat!", "bolt", "|", "shapes", "face", "v", "frame", "v", "pins", "v", "|", "chart", "|", 3, "plsql", "v", "play!", "|", "dbDown", "dbUp", "|", "plugNew", "v", "plugX", "v", "_"]} />
        <Gap $w={5} />
        <DoubleSep />
        <WorkspaceCombo>
          <span>&lt;No Workspace selected&gt;</span>
          <ChevDown />
        </WorkspaceCombo>
        <Gap $w={1} />
        <Strip items={["wsSave", "wsDel", "_", "|"]} />
        <JumpInput>Jump to... (Ctrl+J)</JumpInput>
      </ToolRow>
      <ToolRow>
        <Strip items={["gearSave", "g1", "g2", "|", "g3", "g4", "g5", "|", 1, "g6", "g7", "g8", "g9", "g10", "g11"]} />
      </ToolRow>
      <ConnBar>
        <ConnTab>
          <Icon name="plug" />
          C##EMS@LVI_EMSTEST
        </ConnTab>
      </ConnBar>
      <WinBar>
        <WinTab $w={64}><Icon name="editor" size={16} />Editor</WinTab>
        <WinTab $w={115}><Icon name="schema" size={16} />Schema Browser</WinTab>
        <WinTab $w={114} $on><Icon name="schema" size={16} />Schema Browser</WinTab>
        <WinTab $w={115}><Icon name="schema" size={16} />Schema Browser</WinTab>
      </WinBar>
      <Main>
        <ProjectPanel>
          <PanelHead>
            <PanelTitle>Project Manager</PanelTitle>
            <HeadTools>
              <Svg width="9" height="11" viewBox="0 0 9 11">
                <path d="M2.500 .5h4v5h-4zM1 6h7M4.500 6v5" fill="none" stroke="#111" />
              </Svg>
              <Svg width="9" height="9" viewBox="0 0 9 9">
                <path d="M1 1l7 7M8 1L1 8" stroke="#444" />
              </Svg>
            </HeadTools>
          </PanelHead>
          <PanelTools>
            <Strip items={["plus:15", 3, "v", "|", 1, "folder", "v", "|", 1, "newDoc", "floppy", "printer"]} />
            <MoreGlyph>»<MoreDrop /></MoreGlyph>
          </PanelTools>
          <SideTabs>
            <SideTab $on><Icon name="book" /></SideTab>
            <SideTab><Icon name="dbStack" /></SideTab>
          </SideTabs>
          <TreeBox>
            <TreeRow><Elbow /><Icon name="trash" /><TreeLabel>Trash can</TreeLabel></TreeRow>
            <TreeRow><Elbow $tall /><Icon name="book" /><TreeLabel>TOAD project</TreeLabel></TreeRow>
          </TreeBox>
        </ProjectPanel>
        <SchemaPanel>
          <Combo $h={20}>C##EMS<ComboCaret /></Combo>
          <Combo $h={22}>Tables<ChevDown /></Combo>
          <FilterRow>
            <Strip items={["filterHat:22", 3, "v", 5]} />
            <FilterInput>*ESD*</FilterInput>
          </FilterRow>
          <IconRow $h={21} $mt={15}>
            <Strip items={[4, "chart", "newDoc", "docEdit", "dbDoc", "sql", "numbers", "medal", "tree", "calc"]} />
            <TextButton>a=b</TextButton>
          </IconRow>
          <IconRow $h={22} $mt={1}>
            <Strip items={[4, "hammerRed", "dots", "funnel", "v", "scissors", "axe"]} />
          </IconRow>
          <TableList>
            <ListHead>
              <ListHeadCell $w={31} $pl={6}>Img</ListHeadCell>
              <ListHeadCell $w={116} $pl={6}>Table<SortUp /></ListHeadCell>
            </ListHead>
            <ListRow $on>EMS_ESD_CHECK</ListRow>
            <ListRow>EMS_ESD_STANDARD</ListRow>
          </TableList>
        </SchemaPanel>
        <Splitter><SplitArrow /><SplitArrow /></Splitter>
        <DataPane>
          <PaneTools>
            <Strip items={["plug:20", 3, "v", "|", "arrowL", "v", "arrowR", "v", "|", 3, "r1", "r2", "r3:19", 3, "|", "funnelBlack", "listSmall", "|", 2, "chart", "v"]} />
          </PaneTools>
          <InfoLine>
            <InfoPart $w={98}>EMS_ESD_CHECK:</InfoPart>
            <InfoPart $w={184}>Created: 2020/10/27 上午 11:55:45</InfoPart>
            <InfoPart $w={200}>Last DDL: 2020/12/26 下午 07:05:52</InfoPart>
          </InfoLine>
          <TabStrip>
            <PageTab $w={55} $on>Columns</PageTab>
            {pageTabs.map(([t, w]) => (
              <PageTab key={t} $w={w}>{t}</PageTab>
            ))}
          </TabStrip>
          <GridTools>
            <Strip items={[1, "colGrid", 1, "v", "|", 2, "addBars", "delBars", "xy", "|", "funnel", "v", "printer", "clip", "v"]} />
          </GridTools>
          <GridPanel>
            <Grid>
              <IndicatorCell $head><GripLines /></IndicatorCell>
              {heads.map((h) => (
                <HeadCell key={h} $sort={h === "Data Type"}>
                  {h}
                  {h === "Data Type" && (
                    <SortHollow width="8" height="7" viewBox="0 0 8 7">
                      <path d="M4 .8L7.300 6.500H.7z" fill="none" stroke="#aaa" />
                    </SortHollow>
                  )}
                </HeadCell>
              ))}
              {rows.map((r) => (
                <Row key={r[0]} r={r} />
              ))}
            </Grid>
          </GridPanel>
          <RedFrame />
        </DataPane>
      </Main>
      <Watermark>https://blog.csdn.net/caoguanghui0804</Watermark>
    </Page>
  );
}
